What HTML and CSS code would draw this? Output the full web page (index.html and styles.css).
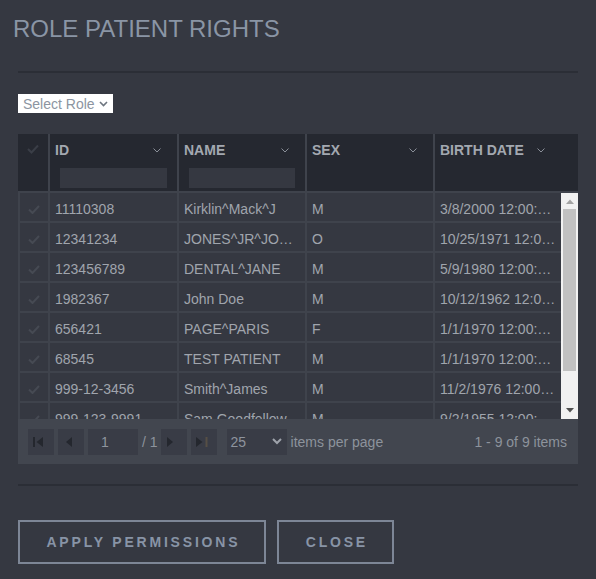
FILE: index.html
```html
<!DOCTYPE html>
<html>
<head>
<meta charset="utf-8">
<title>Role Patient Rights</title>
<link rel="stylesheet" href="styles.css">
</head>
<body>
<div class="dialog">
  <h1 class="title">ROLE PATIENT RIGHTS</h1>
  <hr class="divider">
  <div class="role-select">
    <span>Select Role</span>
    <svg class="role-chev" width="9" height="6" viewBox="0 0 9 6"><polyline points="1,1 4.5,4.5 8,1" fill="none" stroke="#6e7680" stroke-width="1.6"/></svg>
  </div>

  <div class="grid">
    <div class="grid-head">
      <div class="hcell hcheck"><svg width="12" height="10" viewBox="0 0 12 10"><polyline points="1,5 4.5,8.5 11,1.5" fill="none" stroke="#3a3e47" stroke-width="2"/></svg></div>
      <div class="hcell">
        <div class="hlabel"><span>ID</span><svg width="8" height="5" viewBox="0 0 8 5"><polyline points="0.5,0.5 4,4 7.5,0.5" fill="none" stroke="#8a8f98" stroke-width="1"/></svg></div>
        <div class="filter"></div>
      </div>
      <div class="hcell">
        <div class="hlabel"><span>NAME</span><svg width="8" height="5" viewBox="0 0 8 5"><polyline points="0.5,0.5 4,4 7.5,0.5" fill="none" stroke="#8a8f98" stroke-width="1"/></svg></div>
        <div class="filter"></div>
      </div>
      <div class="hcell">
        <div class="hlabel"><span>SEX</span><svg width="8" height="5" viewBox="0 0 8 5"><polyline points="0.5,0.5 4,4 7.5,0.5" fill="none" stroke="#8a8f98" stroke-width="1"/></svg></div>
      </div>
      <div class="hcell">
        <div class="hlabel"><span>BIRTH DATE</span><svg width="8" height="5" viewBox="0 0 8 5"><polyline points="0.5,0.5 4,4 7.5,0.5" fill="none" stroke="#8a8f98" stroke-width="1"/></svg></div>
      </div>
      <div class="hspacer"></div>
    </div>

    <div class="grid-body">
      <div class="rows">
        <div class="row"><div class="cell ccheck"><svg width="12" height="9" viewBox="0 0 12 9"><polyline points="1,4.5 4.5,8 11,1" fill="none" stroke="#464a53" stroke-width="2"/></svg></div><div class="cell">11110308</div><div class="cell">Kirklin^Mack^J</div><div class="cell">M</div><div class="cell">3/8/2000 12:00:00 AM</div></div>
        <div class="row"><div class="cell ccheck"><svg width="12" height="9" viewBox="0 0 12 9"><polyline points="1,4.5 4.5,8 11,1" fill="none" stroke="#464a53" stroke-width="2"/></svg></div><div class="cell">12341234</div><div class="cell">JONES^JR^JOHNNY</div><div class="cell">O</div><div class="cell">10/25/1971 12:00:00 AM</div></div>
        <div class="row"><div class="cell ccheck"><svg width="12" height="9" viewBox="0 0 12 9"><polyline points="1,4.5 4.5,8 11,1" fill="none" stroke="#464a53" stroke-width="2"/></svg></div><div class="cell">123456789</div><div class="cell">DENTAL^JANE</div><div class="cell">M</div><div class="cell">5/9/1980 12:00:00 AM</div></div>
        <div class="row"><div class="cell ccheck"><svg width="12" height="9" viewBox="0 0 12 9"><polyline points="1,4.5 4.5,8 11,1" fill="none" stroke="#464a53" stroke-width="2"/></svg></div><div class="cell">1982367</div><div class="cell">John Doe</div><div class="cell">M</div><div class="cell">10/12/1962 12:00:00 AM</div></div>
        <div class="row"><div class="cell ccheck"><svg width="12" height="9" viewBox="0 0 12 9"><polyline points="1,4.5 4.5,8 11,1" fill="none" stroke="#464a53" stroke-width="2"/></svg></div><div class="cell">656421</div><div class="cell">PAGE^PARIS</div><div class="cell">F</div><div class="cell">1/1/1970 12:00:00 AM</div></div>
        <div class="row"><div class="cell ccheck"><svg width="12" height="9" viewBox="0 0 12 9"><polyline points="1,4.5 4.5,8 11,1" fill="none" stroke="#464a53" stroke-width="2"/></svg></div><div class="cell">68545</div><div class="cell">TEST PATIENT</div><div class="cell">M</div><div class="cell">1/1/1970 12:00:00 AM</div></div>
        <div class="row"><div class="cell ccheck"><svg width="12" height="9" viewBox="0 0 12 9"><polyline points="1,4.5 4.5,8 11,1" fill="none" stroke="#464a53" stroke-width="2"/></svg></div><div class="cell">999-12-3456</div><div class="cell">Smith^James</div><div class="cell">M</div><div class="cell">11/2/1976 12:00:00 AM</div></div>
        <div class="row"><div class="cell ccheck"><svg width="12" height="9" viewBox="0 0 12 9"><polyline points="1,4.5 4.5,8 11,1" fill="none" stroke="#464a53" stroke-width="2"/></svg></div><div class="cell">999-123-9991</div><div class="cell">Sam Goodfellow</div><div class="cell">M</div><div class="cell">9/2/1955 12:00:00 AM</div></div>
      </div>
      <div class="scrollbar">
        <div class="sb-btn sb-up"><svg width="8" height="5" viewBox="0 0 8 5"><polygon points="0,5 8,5 4,0.5" fill="#a3a3a3"/></svg></div>
        <div class="sb-track"><div class="sb-thumb"></div></div>
        <div class="sb-btn sb-down"><svg width="8" height="5" viewBox="0 0 8 5"><polygon points="0,0 8,0 4,4.5" fill="#505050"/></svg></div>
      </div>
    </div>

    <div class="pager">
      <div class="pg-btn"><svg width="26" height="26" viewBox="0 0 26 26"><rect x="5" y="8" width="2" height="10" fill="#24272e"/><polygon points="15,8 15,18 8.5,13" fill="#24272e"/></svg></div>
      <div class="pg-btn"><svg width="26" height="26" viewBox="0 0 26 26"><polygon points="14,8 14,18 8,13" fill="#24272e"/></svg></div>
      <div class="pg-input">1</div>
      <span class="pg-of">/ 1</span>
      <div class="pg-btn"><svg width="26" height="26" viewBox="0 0 26 26"><polygon points="6,8 6,18 12,13" fill="#24272e"/></svg></div>
      <div class="pg-btn"><svg width="26" height="26" viewBox="0 0 26 26"><polygon points="5,8 5,18 11.5,13" fill="#24272e"/><rect x="14.5" y="8" width="2" height="10" fill="#574f45"/></svg></div>
      <div class="pg-size"><span>25</span><svg width="10" height="7" viewBox="0 0 10 7"><polyline points="1,1 5,5 9,1" fill="none" stroke="#9ea3ab" stroke-width="2"/></svg></div>
      <span class="pg-label">items per page</span>
      <span class="pg-info">1 - 9 of 9 items</span>
    </div>
  </div>

  <hr class="divider divider-bottom">

  <div class="actions">
    <button class="btn btn-apply">APPLY PERMISSIONS</button>
    <button class="btn btn-close">CLOSE</button>
  </div>
</div>
</body>
</html>
```

FILE: styles.css
```css
html, body {
  margin: 0;
  background: #353841;
}
body {
  font-family: "Liberation Sans", Arial, sans-serif;
}
.dialog {
  padding: 15px 18px 0;
}
.title {
  margin: 0 0 0 -5px;
  font-size: 24px;
  line-height: 28px;
  font-weight: normal;
  color: #8a95a5;
}
.divider {
  margin: 28px 0 0;
  border: 0;
  height: 2px;
  background: #2b2e36;
}
.divider-bottom {
  margin-top: 20px;
}
.role-select {
  margin-top: 21px;
  width: 95px;
  height: 19px;
  box-sizing: border-box;
  padding: 0 5px;
  background: #ffffff;
  display: flex;
  align-items: center;
  justify-content: space-between;
  font-size: 14px;
  color: #8c95a1;
}
.role-chev {
  display: block;
}

/* grid */
.grid {
  margin-top: 21px;
}
.grid-head {
  display: grid;
  grid-template-columns: 30px 129px 128px 128px 128px 17px;
  height: 59px;
  box-sizing: border-box;
  background: #252830;
  border-bottom: 2px solid #3f434c;
}
.hcell {
  border-left: 2px solid #3f434c;
  padding-top: 8px;
}
.hcheck {
  border-left: 0;
  display: flex;
  justify-content: center;
  padding-top: 10px;
}
.hcheck svg {
  display: block;
}
.hlabel {
  display: flex;
  align-items: center;
  justify-content: space-between;
  padding: 0 16px 0 5px;
  font-size: 14px;
  line-height: 16px;
  font-weight: bold;
  color: #a3a8b0;
}
.hlabel svg {
  display: block;
  flex: none;
}
.filter {
  margin: 10px 10px 0;
  height: 20px;
  background: #353841;
}

.grid-body {
  display: flex;
  height: 226px;
}
.rows {
  width: 543px;
  overflow: hidden;
  background: #353841;
}
.row {
  display: grid;
  grid-template-columns: 30px 129px 128px 128px 128px;
  height: 30px;
  box-sizing: border-box;
  border-bottom: 2px solid #3f434c;
}
.cell {
  min-width: 0;
  border-left: 2px solid #3f434c;
  padding: 5px 5px 0 5px;
  font-size: 14px;
  line-height: 23px;
  color: #a0a5ad;
  white-space: nowrap;
  overflow: hidden;
  text-overflow: ellipsis;
}
.ccheck {
  display: flex;
  justify-content: center;
  padding: 12px 0 0;
}
.ccheck svg {
  display: block;
}

.scrollbar {
  width: 17px;
  background: #f1f1f1;
  display: flex;
  flex-direction: column;
}
.sb-btn {
  display: flex;
  align-items: center;
  justify-content: center;
}
.sb-up {
  height: 16px;
}
.sb-down {
  height: 17px;
}
.sb-btn svg {
  display: block;
}
.sb-track {
  flex: 1;
  padding: 0 2px;
}
.sb-thumb {
  height: 162px;
  background: #c1c1c1;
}

/* pager */
.pager {
  display: flex;
  align-items: center;
  height: 45px;
  box-sizing: border-box;
  padding: 0 11px 0 10px;
  background: #42464f;
  font-size: 14px;
  color: #8d939c;
}
.pg-btn {
  width: 26px;
  height: 26px;
  margin-right: 4px;
  background: #393c46;
  flex: none;
}
.pg-btn svg {
  display: block;
}
.pg-input {
  width: 50px;
  height: 26px;
  box-sizing: border-box;
  padding-left: 13px;
  line-height: 26px;
  background: #393c46;
  color: #8e949e;
}
.pg-of {
  margin: 0 3px 0 4px;
}
.pg-size {
  width: 60px;
  height: 26px;
  box-sizing: border-box;
  margin-left: 6px;
  padding: 0 5px 0 4px;
  background: #393c46;
  display: flex;
  align-items: center;
  justify-content: space-between;
  color: #8e949e;
}
.pg-size svg {
  display: block;
}
.pg-label {
  margin-left: 4px;
}
.pg-info {
  margin-left: auto;
}

/* actions */
.actions {
  margin-top: 34px;
  display: flex;
  gap: 11px;
}
.btn {
  height: 44px;
  box-sizing: border-box;
  border: 2px solid #7d8696;
  background: transparent;
  color: #8894a6;
  font-family: "Liberation Sans", Arial, sans-serif;
  font-size: 14px;
  font-weight: bold;
  letter-spacing: 2.8px;
  padding: 0 0 0 2.8px;
}
.btn-apply {
  width: 248px;
}
.btn-close {
  width: 117px;
}
```
